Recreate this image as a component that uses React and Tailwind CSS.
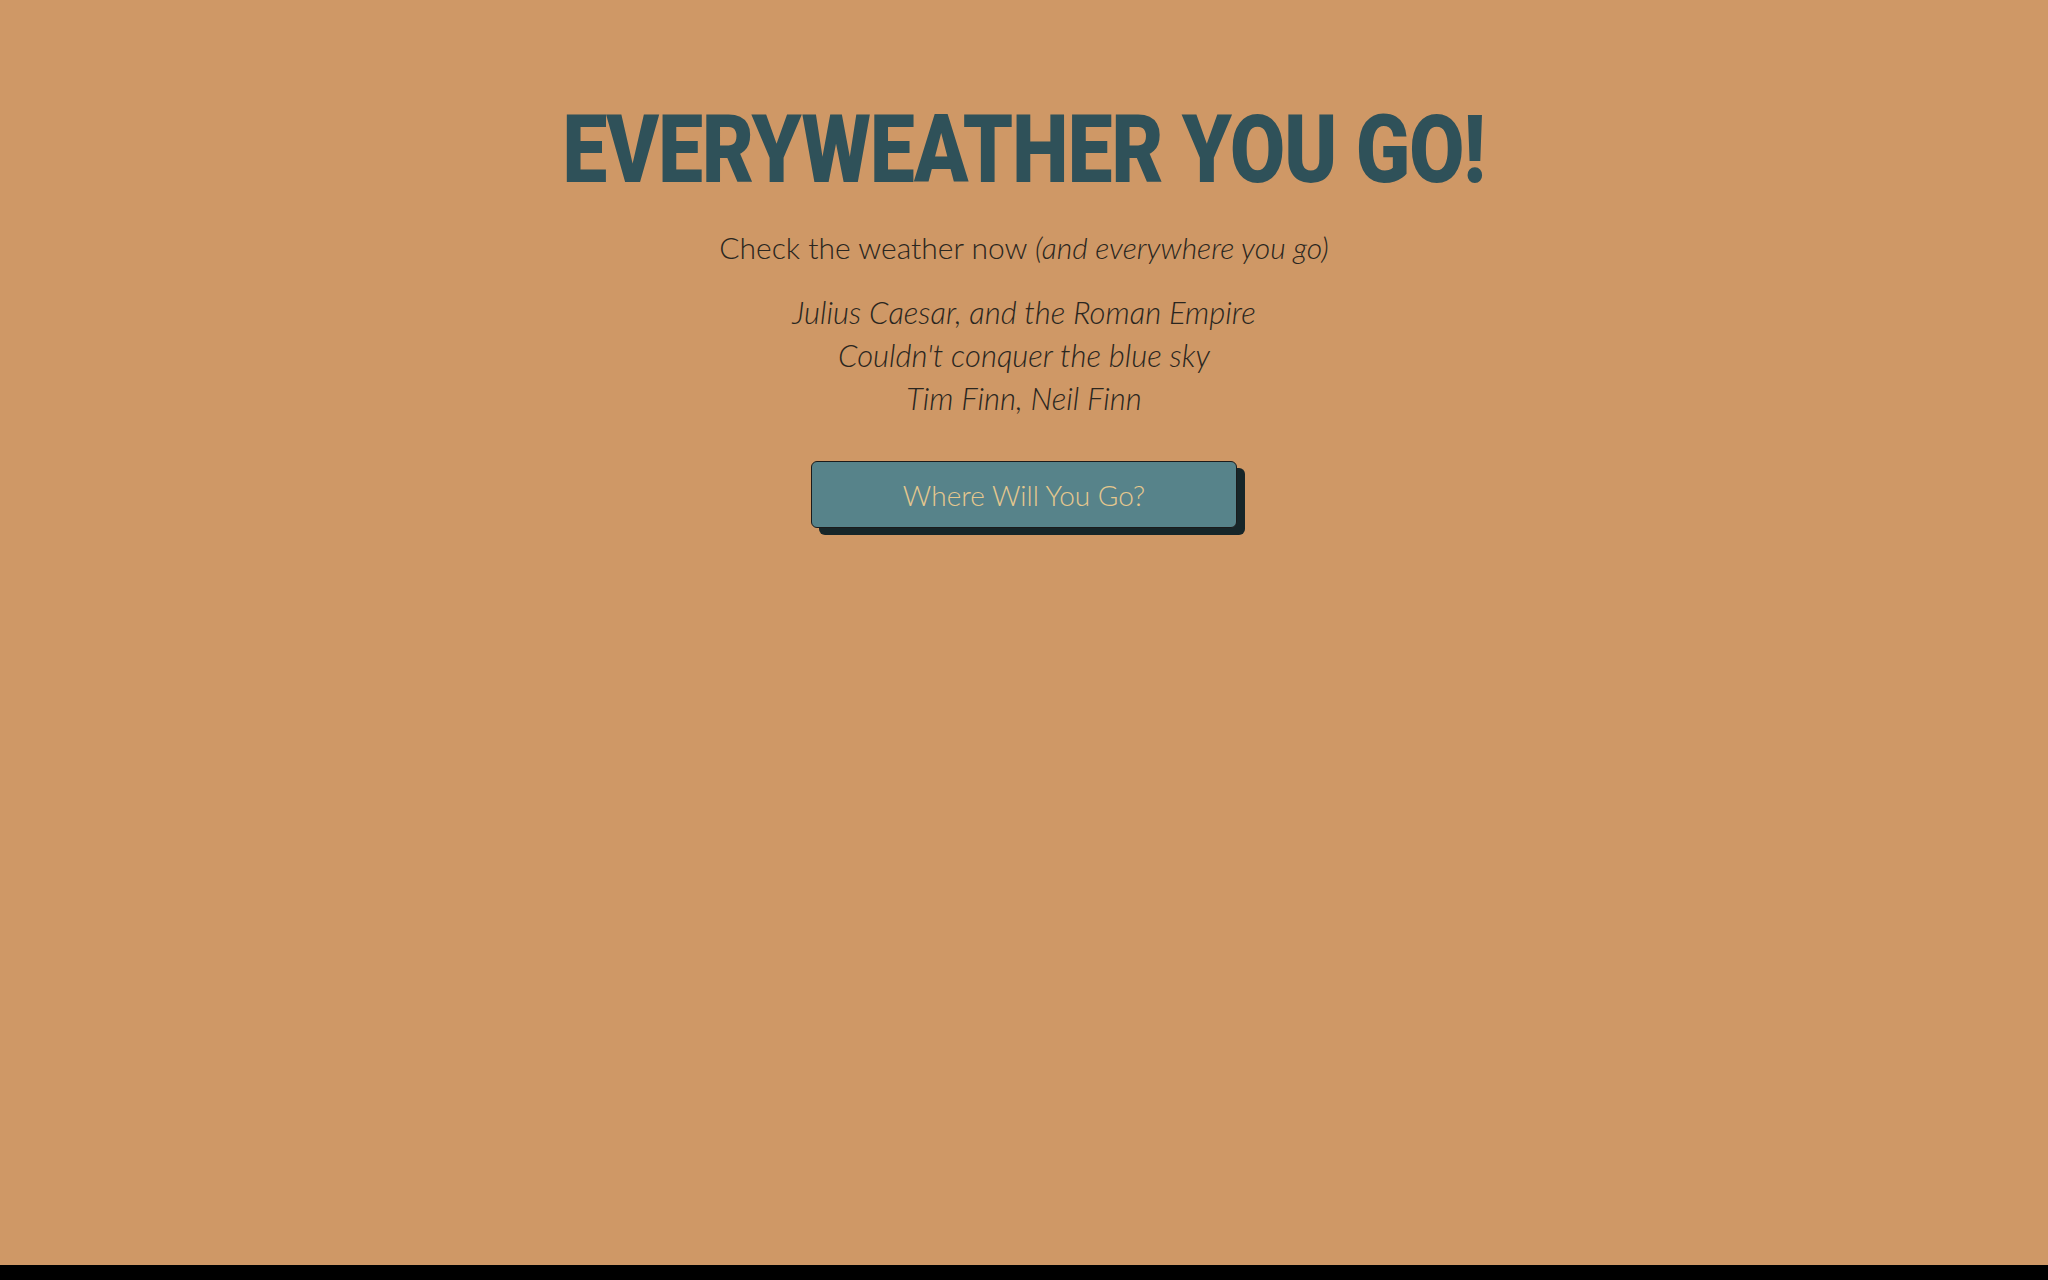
const App = () => {
  return (
    <div className="h-[1280px] bg-black">
      <main className="h-[1265px] bg-[#cf9866] flex flex-col items-center font-['Lato',sans-serif] text-[#2a2620]">
        <h1 className="mt-[103px] h-[94px] flex items-center justify-center">
          <span className="inline-block scale-x-[0.85] whitespace-nowrap font-['Roboto',sans-serif] font-black text-[94px] leading-none tracking-[-1px] text-[#2f5159]">
            EVERYWEATHER YOU GO!
          </span>
        </h1>
        <p className="mt-[35px] text-[30px] font-light leading-none">
          Check the weather now <em>(and everywhere you go)</em>
        </p>
        <blockquote className="mt-[29px] text-center text-[31px] font-light italic leading-[43px]">
          <p>Julius Caesar, and the Roman Empire</p>
          <p>Couldn't conquer the blue sky</p>
          <p>Tim Finn, Neil Finn</p>
        </blockquote>
        <button className="mt-[41px] w-[426px] h-[67px] rounded-[6px] border-[1.5px] border-[#1b1b1b] bg-[#57838a] text-[#e6c88e] text-[28px] font-light shadow-[8px_7px_0_#172629]">
          Where Will You Go?
        </button>
      </main>
    </div>
  );
};

export default App;
